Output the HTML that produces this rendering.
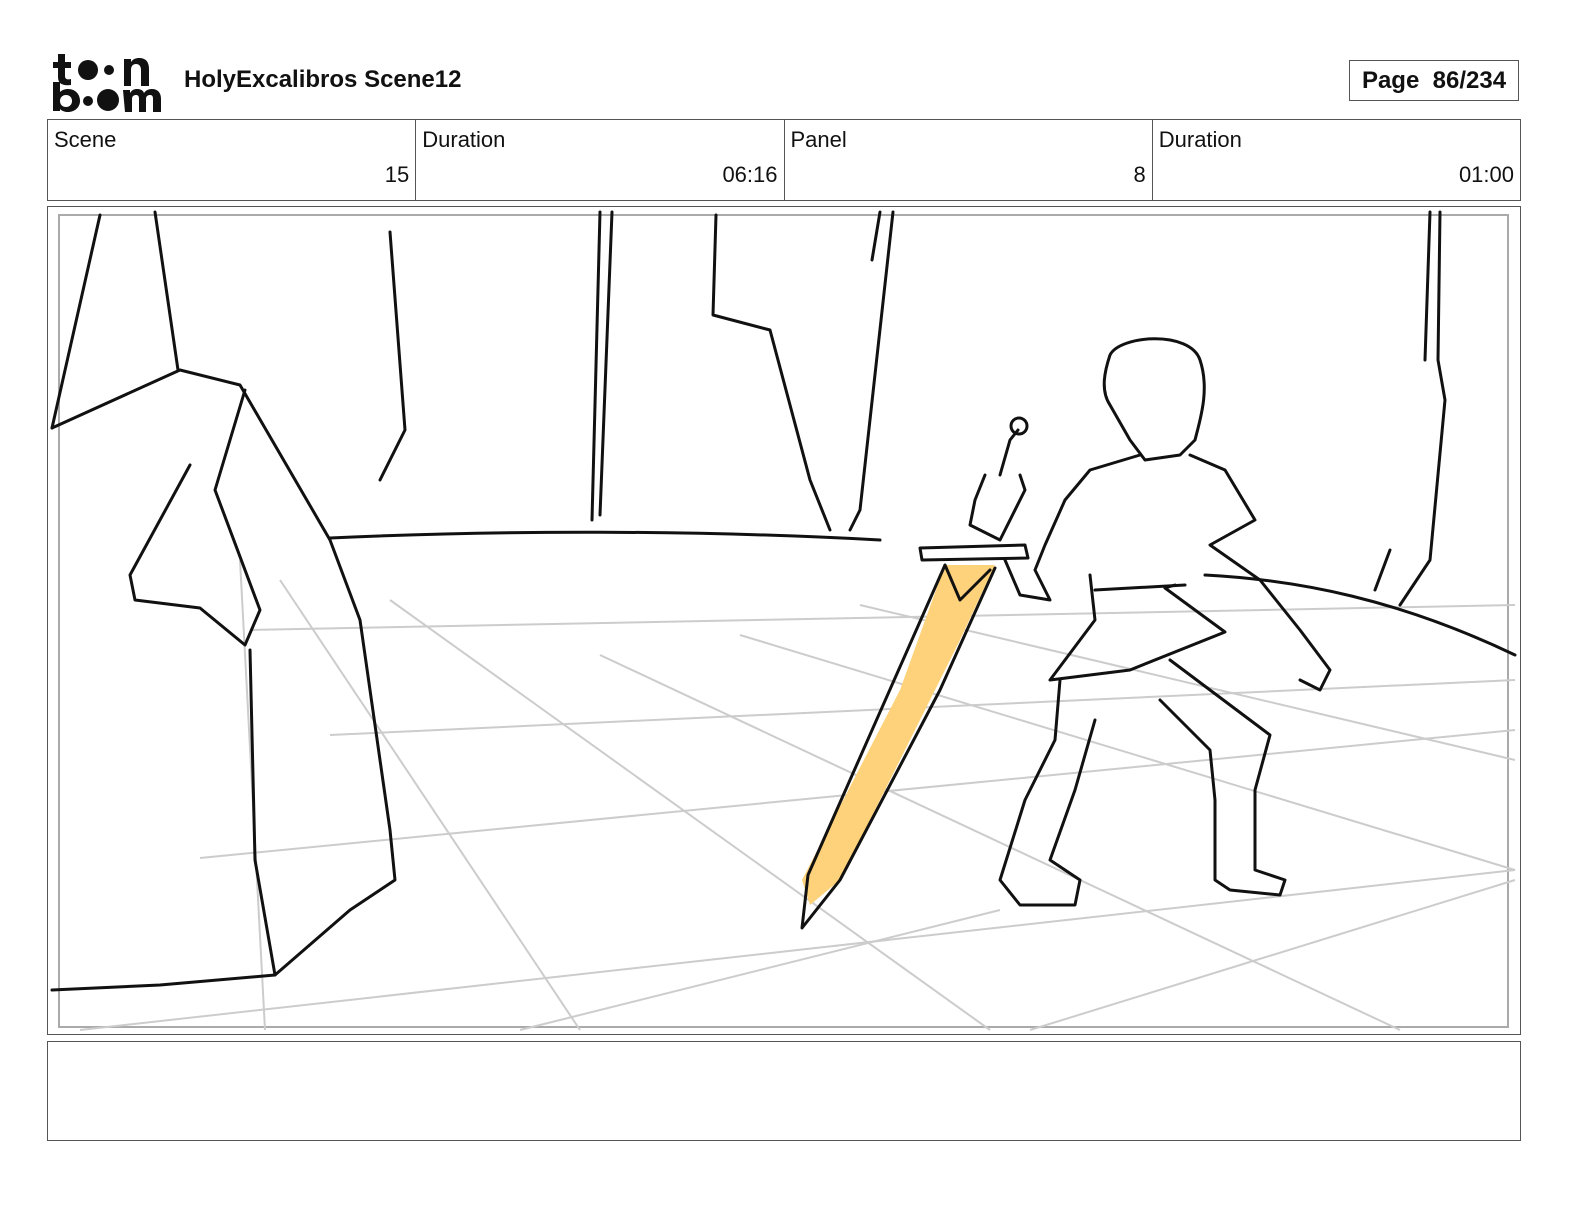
<!DOCTYPE html>
<html><head><meta charset="utf-8"><style>
html,body{margin:0;padding:0;background:#fff;}
body{width:1584px;height:1224px;position:relative;font-family:"Liberation Sans",sans-serif;color:#111;overflow:hidden}
.abs{position:absolute}
.title{left:184px;top:66px;font-size:24px;font-weight:bold}
.page{left:1349px;top:60px;width:170px;height:41px;border:1px solid #555;box-sizing:border-box;font-weight:bold;font-size:24px;line-height:40px;text-align:center}
.hdr{left:47px;top:119px;width:1474px;height:82px;border:1px solid #555;box-sizing:border-box;display:flex}
.cell{flex:1;border-right:1px solid #555;position:relative;font-size:22px}
.cell:last-child{border-right:none}
.cell .l{position:absolute;left:6px;top:7px}
.cell .v{position:absolute;right:6px;top:42px}
.panel{left:47px;top:206px;width:1474px;height:829px;border:1px solid #555;box-sizing:border-box}
.notes{left:47px;top:1041px;width:1474px;height:100px;border:1px solid #555;box-sizing:border-box}
</style></head><body>
<svg class="abs" style="left:50px;top:50px" width="114" height="62" viewBox="0 0 114 62">
<g fill="#111">
<path d="M8 4h7v8h6v6h-6v8c0 3 2 4 6 3v6c-8 1-13-1-13-8v-9H3v-6h5z"/>
<circle cx="38" cy="20" r="10"/><circle cx="59" cy="20" r="5"/>
<path d="M74 9h7v3c2-3 5-4 8-4 7 0 10 4 10 11v17h-8V20c0-4-2-6-5-6s-5 2-5 6v16h-7z"/>
<path d="M3 32h7v10c2-2 5-3 8-3 8 0 12 6 12 12s-5 11-12 11c-3 0-6-1-8-3v2H3zM16 45c-4 0-6 3-6 6s2 6 6 6 6-3 6-6-2-6-6-6z"/>
<circle cx="38" cy="51" r="5"/><circle cx="58" cy="50" r="11"/>
<path d="M73 40h7v3c2-3 4-4 7-4s6 1 7 4c2-3 5-4 8-4 6 0 9 4 9 10v13h-8V49c0-3-1-4-3-4s-4 1-4 4v13h-7V49c0-3-1-4-3-4s-4 1-4 4v13h-7z"/>
</g></svg>
<div class="abs title">HolyExcalibros Scene12</div>
<div class="abs page">Page &nbsp;86/234</div>
<div class="abs hdr">
<div class="cell"><span class="l">Scene</span><span class="v">15</span></div>
<div class="cell"><span class="l">Duration</span><span class="v">06:16</span></div>
<div class="cell"><span class="l">Panel</span><span class="v">8</span></div>
<div class="cell"><span class="l">Duration</span><span class="v">01:00</span></div>
</div>
<div class="abs panel"></div>
<svg class="abs" style="left:0;top:0" width="1584" height="1224" viewBox="0 0 1584 1224">
<rect x="59" y="215" width="1449" height="812" fill="none" stroke="#aaa" stroke-width="2"/>
<g stroke="#ccc" stroke-width="2" fill="none">
<path d="M250 630 L1515 605"/><path d="M330 735 L1515 680"/><path d="M200 858 L1515 730"/>
<path d="M80 1030 L1515 870"/>
<path d="M240 560 L265 1030"/><path d="M280 580 L580 1030"/><path d="M390 600 L990 1030"/>
<path d="M600 655 L1400 1030"/><path d="M740 635 L1515 870"/><path d="M860 605 L1515 760"/>
<path d="M520 1030 L1000 910"/><path d="M1030 1030 L1515 880"/>
</g>
<path d="M945 565 L995 565 L960 640 L840 880 L810 905 L802 880 L900 690 Z" fill="#fdd27a"/>
<g stroke="#111" stroke-width="3" fill="none" stroke-linecap="round" stroke-linejoin="round">
<path d="M52 428 L100 215"/><path d="M52 428 L180 370 L240 385 L330 540 L360 620 L390 830 L395 880 L350 910 L275 975 L160 985 L52 990"/>
<path d="M155 212 L178 370"/><path d="M245 390 L215 490 L260 610 L245 645 L200 608 L135 600 L130 575 L190 465"/>
<path d="M250 650 L255 860 L275 975"/>
<path d="M330 538 C500 530 700 530 880 540"/>
<path d="M390 232 L405 430 L380 480"/><path d="M600 212 L592 520"/><path d="M612 212 L600 515"/>
<path d="M716 215 L713 315 L770 330 L810 480 L830 530"/><path d="M893 212 L860 510 L850 530"/><path d="M880 212 L872 260"/>
<path d="M1430 212 L1425 360"/><path d="M1440 212 L1438 360 L1445 400 L1430 560 L1400 605"/>
<path d="M1205 575 C1300 580 1400 600 1515 655"/><path d="M1390 550 L1375 590"/>
<path d="M920 548 L1025 545 L1028 558 L922 560 Z"/>
<path d="M945 565 L960 600 L990 570 M995 568 L940 690 L840 880 L802 928 L808 875 L945 565"/>
<path d="M1000 475 L1010 440 L1018 430"/><circle cx="1019" cy="426" r="8"/>
<path d="M985 475 L975 500 L970 525 L1000 540 L1025 490 L1020 475"/>
<path d="M1110 355 C1120 335 1190 330 1200 360 C1210 390 1200 420 1195 440 L1180 455 L1145 460 L1130 440 L1110 405 C1100 390 1105 370 1110 355 Z"/>
<path d="M1140 455 L1090 470 L1065 500 L1045 545 L1035 570 L1050 600 L1020 595 L1005 560"/>
<path d="M1190 455 L1225 470 L1255 520 L1210 545 L1260 580 L1300 630 L1330 670 L1320 690 L1300 680"/>
<path d="M1090 575 L1095 620 L1050 680 L1130 670 L1225 632 L1165 588 L1175 585"/>
<path d="M1095 590 L1185 585"/>
<path d="M1060 680 L1055 740 L1025 800 L1000 880 L1020 905 L1075 905 L1080 880 L1050 860 L1075 790 L1095 720"/>
<path d="M1170 660 L1250 720 L1270 735 L1255 790 L1255 870 L1285 880 L1280 895 L1230 890 L1215 880 L1215 800 L1210 750 L1160 700"/>
</g>
</svg>
<div class="abs notes"></div>
</body></html>
